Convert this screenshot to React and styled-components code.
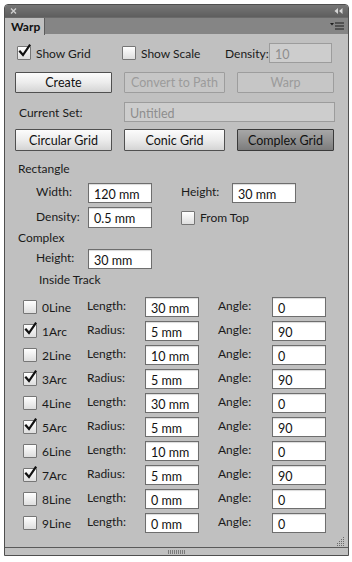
import React from "react"
import styled, { createGlobalStyle } from "styled-components"

const GlobalStyle = createGlobalStyle`
  body {
    margin: 0;
    background: #fff;
    font-family: Lato, "Liberation Sans", sans-serif;
    font-size: 12px;
    color: #1a1a1a;
  }
`

const tracks = [
  { name: "0Line", on: false, kind: "Length:", value: "30 mm", angle: "0" },
  { name: "1Arc", on: true, kind: "Radius:", value: "5 mm", angle: "90" },
  { name: "2Line", on: false, kind: "Length:", value: "10 mm", angle: "0" },
  { name: "3Arc", on: true, kind: "Radius:", value: "5 mm", angle: "90" },
  { name: "4Line", on: false, kind: "Length:", value: "30 mm", angle: "0" },
  { name: "5Arc", on: true, kind: "Radius:", value: "5 mm", angle: "90" },
  { name: "6Line", on: false, kind: "Length:", value: "10 mm", angle: "0" },
  { name: "7Arc", on: true, kind: "Radius:", value: "5 mm", angle: "90" },
  { name: "8Line", on: false, kind: "Length:", value: "0 mm", angle: "0" },
  { name: "9Line", on: false, kind: "Length:", value: "0 mm", angle: "0" },
]

function CheckBox({ checked, label, gap = 5 }) {
  return (
    <CheckWrap $gap={gap}>
      <Box>
        {checked && (
          <svg width="15" height="15" viewBox="0 0 15 15">
            <path d="M3 7.5 L6 11 L12.5 1.5" fill="none" stroke="#111" strokeWidth="2.2" strokeLinecap="square" />
          </svg>
        )}
      </Box>
      <span>{label}</span>
    </CheckWrap>
  )
}

function App() {
  return (
    <>
      <GlobalStyle />
      <Panel>
        <TitleBar>
          <svg width="7" height="6" viewBox="0 0 7 6">
            <path d="M1 0.5 L6 5.5 M6 0.5 L1 5.5" stroke="#cfcfcf" strokeWidth="1.4" />
          </svg>
          <svg width="9" height="6" viewBox="0 0 9 6">
            <path d="M4 0 L0.5 3 L4 6 Z M8.5 0 L5 3 L8.5 6 Z" fill="#d6d6d6" />
          </svg>
        </TitleBar>
        <TabBar>
          <Tab>Warp</Tab>
          <svg width="14" height="9" viewBox="0 0 14 9">
            <path d="M0 1 L4 1 L2 3.5 Z" fill="#1e1e1e" />
            <path d="M5 1 H14 M5 4 H14 M5 7 H14" stroke="#1e1e1e" strokeWidth="1.2" />
          </svg>
        </TabBar>
        <Content>
          <Row $top={9} $h={20}>
            <Cell $w={107} $pad={2}>
              <CheckBox checked label="Show Grid" />
            </Cell>
            <Cell $w={103}>
              <CheckBox label="Show Scale" />
            </Cell>
            <Label $w={44}>Density:</Label>
            <Field $w={63} disabled>10</Field>
          </Row>

          <ButtonRow $top={9} $h={21}>
            <Button>Create</Button>
            <Button disabled>Convert to Path</Button>
            <Button disabled>Warp</Button>
          </ButtonRow>

          <Row $top={9} $h={20}>
            <Label $w={109} $pad={4}>Current Set:</Label>
            <Field $w={211} disabled>Untitled</Field>
          </Row>

          <ButtonRow $top={7} $h={22}>
            <Button>Circular Grid</Button>
            <Button>Conic Grid</Button>
            <Button $active>Complex Grid</Button>
          </ButtonRow>

          <Section $top={10}>Rectangle</Section>
          <Row $top={6} $h={20}>
            <Label $w={73} $pad={21} $raise>Width:</Label>
            <Field $w={64}>120 mm</Field>
            <Label $w={80} $pad={29} $raise>Height:</Label>
            <Field $w={64}>30 mm</Field>
          </Row>
          <Row $top={4} $h={21}>
            <Label $w={73} $pad={21} $raise>Density:</Label>
            <Field $w={64}>0.5 mm</Field>
            <Cell $pad={29}>
              <CheckBox label="From Top" />
            </Cell>
          </Row>

          <Section $top={2}>Complex</Section>
          <Row $top={3} $h={20}>
            <Label $w={73} $pad={21} $raise>Height:</Label>
            <Field $w={64}>30 mm</Field>
          </Row>
          <Section $top={3} $pad={21}>Inside Track</Section>

          <Tracks>
            {tracks.map((t) => (
              <Row key={t.name} $h={20}>
                <Cell $w={72} $pad={8}>
                  <CheckBox checked={t.on} label={t.name} />
                </Cell>
                <Label $w={58} $raise>{t.kind}</Label>
                <Field $w={54}>{t.value}</Field>
                <Label $w={73} $pad={19} $raise>Angle:</Label>
                <Field $w={54}>{t.angle}</Field>
              </Row>
            ))}
          </Tracks>

          <Grip width="9" height="9" viewBox="0 0 9 9">
            {[
              [7, 0], [5, 2], [7, 2], [3, 4], [5, 4], [7, 4],
              [1, 6], [3, 6], [5, 6], [7, 6], [1, 8], [3, 8], [5, 8], [7, 8],
            ].map(([x, y]) => (
              <rect key={`${x}-${y}`} x={x} y={y} width="1" height="1" fill="#6a6a6a" />
            ))}
          </Grip>
        </Content>
        <Footer>
          <svg width="18" height="4" viewBox="0 0 18 4">
            {Array.from({ length: 9 }).map((_, i) => (
              <rect key={i} x={i * 2} y="0" width="1" height="4" fill="#7a7a7a" />
            ))}
          </svg>
        </Footer>
      </Panel>
    </>
  )
}

export default App

const Panel = styled.div`
  box-sizing: border-box;
  width: 345px;
  margin: 4px 0 0 4px;
  border: 1px solid #4f4f4f;
  border-radius: 4px 4px 0 0;
  background: #c0c0c0;
  overflow: hidden;
`

const TitleBar = styled.div`
  height: 12px;
  display: flex;
  align-items: center;
  justify-content: space-between;
  padding: 0 5px 0 5px;
  background: linear-gradient(#767676, #5e5e5e);
`

const TabBar = styled.div`
  height: 17px;
  display: flex;
  align-items: center;
  justify-content: space-between;
  padding-right: 4px;
  background: #858585;
  border-top: 1px solid #6a6a6a;
  box-sizing: border-box;
`

const Tab = styled.div`
  box-sizing: border-box;
  width: 40px;
  height: 17px;
  margin-top: 1px;
  padding: 1px 0 0 6px;
  background: #c0c0c0;
  border-right: 1px solid #5c5c5c;
  font-weight: 700;
  font-size: 12px;
  color: #111;
`

const Content = styled.div`
  position: relative;
  height: 513px;
  padding: 0 13px 0 10px;
  display: flex;
  flex-direction: column;
`

const Row = styled.div`
  display: flex;
  align-items: center;
  height: ${(p) => p.$h}px;
  margin-top: ${(p) => p.$top || 0}px;
`

const ButtonRow = styled.div`
  display: grid;
  grid-template-columns: 97px 101px 97px;
  column-gap: 12px;
  height: ${(p) => p.$h}px;
  margin-top: ${(p) => p.$top}px;
`

const Cell = styled.div`
  box-sizing: border-box;
  display: flex;
  align-items: center;
  width: ${(p) => (p.$w ? `${p.$w}px` : "auto")};
  padding-left: ${(p) => p.$pad || 0}px;
`

const Label = styled.div`
  box-sizing: border-box;
  flex: none;
  width: ${(p) => p.$w}px;
  padding-left: ${(p) => p.$pad || 0}px;
  margin-top: ${(p) => (p.$raise ? -3 : 0)}px;
  white-space: nowrap;
`

const Section = styled.div`
  height: 16px;
  line-height: 16px;
  margin-top: ${(p) => p.$top}px;
  padding-left: ${(p) => 3 + (p.$pad || 0)}px;
`

const Field = styled.div`
  box-sizing: border-box;
  flex: none;
  width: ${(p) => p.$w}px;
  height: 100%;
  display: flex;
  align-items: center;
  padding: 2px 0 0 5px;
  background: ${(p) => (p.disabled ? "#cdcdcd" : "#fff")};
  border: 1px solid ${(p) => (p.disabled ? "#9c9c9c" : "#6e6e6e")};
  box-shadow: ${(p) => (p.disabled ? "none" : "inset 0 1px 1px rgba(0,0,0,0.15)")};
  color: ${(p) => (p.disabled ? "#8e8e8e" : "#111")};
  font-size: 12.5px;
`

const Button = styled.div`
  box-sizing: border-box;
  display: flex;
  align-items: center;
  justify-content: center;
  border: 1px solid ${(p) => (p.disabled ? "#9d9d9d" : p.$active ? "#3a3a3a" : "#505050")};
  border-radius: 1px;
  background: ${(p) =>
    p.disabled
      ? "#c6c6c6"
      : p.$active
      ? "linear-gradient(#a7a7a7, #939393 50%, #7c7c7c)"
      : "linear-gradient(#fcfcfc, #ececec 50%, #d4d4d4)"};
  color: ${(p) => (p.disabled ? "#9b9b9b" : "#111")};
  font-size: 12.5px;
`

const CheckWrap = styled.label`
  display: flex;
  align-items: center;
  gap: ${(p) => p.$gap}px;
  white-space: nowrap;
`

const Box = styled.span`
  position: relative;
  box-sizing: border-box;
  width: 14px;
  height: 14px;
  flex: none;
  border: 1px solid #767676;
  border-radius: 1px;
  background: linear-gradient(#ffffff, #dedede);

  svg {
    position: absolute;
    left: -1px;
    top: -3px;
  }
`

const Tracks = styled.div`
  display: flex;
  flex-direction: column;
  gap: 4px;
  margin-top: 9px;
`

const Grip = styled.svg`
  position: absolute;
  right: 3px;
  bottom: 1px;
`

const Footer = styled.div`
  height: 7px;
  border-top: 1px solid #5a5a5a;
  display: flex;
  align-items: center;
  justify-content: center;
  background: #c0c0c0;
`
